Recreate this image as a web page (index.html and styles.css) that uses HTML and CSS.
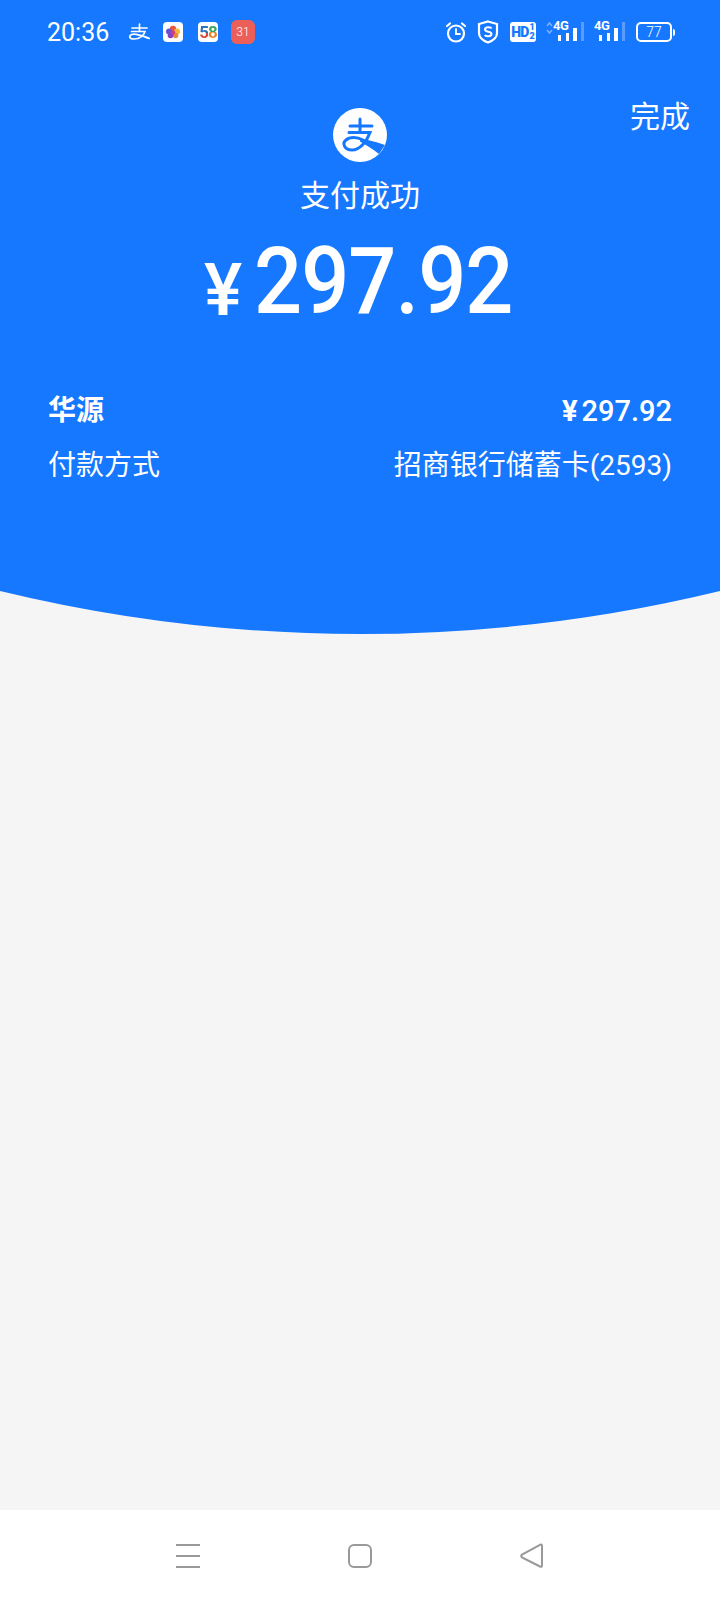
FILE: index.html
```html
<!DOCTYPE html>
<html lang="zh">
<head>
    <meta charset="UTF-8">
    <title>支付成功</title>
    <link rel="stylesheet" href="styles.css">
</head>
<body>
<div id="page">
    <div id="top">
        <div id="status">
            <span class="time">20:36</span>
            <svg class="ic-zhi" viewBox="0 0 22 18"><g fill="none" stroke="#fff" stroke-width="1.7" stroke-linecap="round"><path d="M4 5H19M11.500 1V8M3.500 8.500H17C16 12 12 16 6 16C1.500 16 0.500 13 3.500 11.500C8 9.500 14 13 21.500 15.500"/></g></svg>
            <div class="tile">
                <svg viewBox="0 0 20 20">
                    <circle cx="10" cy="7" r="3.200" fill="#e8583f"/>
                    <circle cx="14" cy="9.500" r="3" fill="#f5b83d"/>
                    <circle cx="12.500" cy="13.500" r="2.800" fill="#e98a3a"/>
                    <circle cx="7.500" cy="13.500" r="2.800" fill="#8a3fc0"/>
                    <circle cx="6" cy="9.500" r="3" fill="#6a4fd0"/>
                    <circle cx="10" cy="10.500" r="2.200" fill="#d23f7a"/>
                </svg>
            </div>
            <div class="tile tile58"><span class="five">5</span><span class="eight">8</span></div>
            <div class="badge31">31</div>
            <div class="spacer"></div>
            <svg class="ic-alarm" viewBox="0 0 22 22"><g fill="none" stroke="#fff" stroke-linecap="round"><circle cx="11" cy="12.500" r="8" stroke-width="2.200"/><path d="M11 8V13H15" stroke-width="1.800"/><path d="M2 5L5 2.500M20 5L17 2.500" stroke-width="2.200"/></g></svg>
            <svg class="ic-shield" viewBox="0 0 22 24"><path d="M11 1.500L20 4V13C20 18 15 21 11 22.500C7 21 2 18 2 13V4Z" fill="none" stroke="#fff" stroke-width="2.200"/><path d="M14.500 8.500C14 7 8 6.500 8 9.500C8 12.500 14.500 11 14.500 14C14.500 17 8.500 16.500 7.800 15" fill="none" stroke="#fff" stroke-width="2"/></svg>
            <div class="hd"><span>HD</span><span class="frac"><em>1</em><em>2</em></span></div>
            <div class="net first">
                <svg class="updown" viewBox="0 0 7 14"><path d="M1 5L3.500 2L6 5M1 9L3.500 12L6 9" fill="none" stroke="#7db0ff" stroke-width="1.500"/></svg>
                <div class="sig"><span class="g">4G</span><i class="b1"></i><i class="b2"></i><i class="b3"></i><i class="b4"></i></div>
            </div>
            <div class="net">
                <div class="sig"><span class="g">4G</span><i class="b1"></i><i class="b2"></i><i class="b3"></i><i class="b4"></i></div>
            </div>
            <div class="batt"><div class="batt-box">77</div><div class="batt-tip"></div></div>
        </div>

        <div id="done">完成</div>
        <div class="logo">
            <svg viewBox="0 0 54 54">
                <circle cx="27" cy="27" r="27" fill="#fff"/>
                <g fill="none" stroke="#1677ff" stroke-width="3" stroke-linecap="round">
                    <path d="M17 18H39M27 11V24M16 24.500H37C34 33 27 42 19 42C11 42 9 35 13 32C17 28.500 24 29 30 32"/>
                </g>
                <path d="M27 30.500C34 31.500 43 34 52 37L46 46C40 41 33 37 27 33.500Z" fill="#1677ff"/>
            </svg>
        </div>
        <div class="title">支付成功</div>
        <div class="amount"><span class="yen">¥</span><span class="num">297.92</span></div>

        <div class="row name"><span>华源</span><span class="price"><b>¥</b>297.92</span></div>
        <div class="row second"><span>付款方式</span><span>招商银行储蓄卡(2593)</span></div>
    </div>
    <svg class="curve" viewBox="0 0 720 44" preserveAspectRatio="none"><path d="M0 0H720A1528 1528 0 0 1 0 0Z" fill="#1677ff"/></svg>
    <div id="blank"></div>
    <div id="nav">
        <svg class="nav-menu" viewBox="0 0 26 26"><path d="M1 2H25M1 13H25M1 24H25" stroke="#999" stroke-width="2" fill="none"/></svg>
        <svg class="nav-home" viewBox="0 0 26 26"><rect x="2" y="2" width="22" height="22" rx="5" fill="none" stroke="#999" stroke-width="2"/></svg>
        <svg class="nav-back" viewBox="0 0 26 26"><path d="M23 3V22.500Q23 24.500 21 23.500L3 14.500Q1.500 13 3 11.500L21 1.800Q23 1 23 3Z" fill="none" stroke="#999" stroke-width="2"/></svg>
    </div>
</div>
</body>
</html>
```

FILE: styles.css
```css
*{
    margin: 0;
    padding: 0;
    box-sizing: border-box;
}
html,body{
    width: 720px;
    height: 1600px;
    overflow: hidden;
}
body{
    font-family: Roboto, "Noto Sans CJK SC", sans-serif;
    color: white;
}
svg{
    display: block;
    flex: none;
}
#page{
    width: 720px;
    height: 1600px;
    display: flex;
    flex-direction: column;
    background: #f5f5f5;
}
#top{
    height: 591px;
    background: #1677ff;
    position: relative;
    flex: none;
}
#status{
    height: 64px;
    padding: 0 45px 0 47px;
    display: flex;
    align-items: center;
}
.time{
    font-size: 25px;
    font-weight: 400;
    width: 81px;
}
.ic-zhi{
    width: 22px;
    height: 18px;
    margin-right: 13px;
}
.tile{
    width: 20px;
    height: 20px;
    border-radius: 4px;
    background: white;
    margin-right: 15px;
}
.tile58{
    display: flex;
    justify-content: center;
    align-items: center;
    font-size: 17px;
    font-weight: 700;
    line-height: 20px;
    letter-spacing: -1px;
}
.five{
    background: linear-gradient(#2f6fb5 55%, #d9483b 55%);
    -webkit-background-clip: text;
    background-clip: text;
    color: transparent;
}
.eight{
    background: linear-gradient(#3aa35c 50%, #e8862a 50%);
    -webkit-background-clip: text;
    background-clip: text;
    color: transparent;
}
.badge31{
    width: 24px;
    height: 24px;
    margin-left: -2px;
    border-radius: 6px;
    background: #ec5f59;
    font-size: 12px;
    font-weight: 300;
    line-height: 24px;
    text-align: center;
}
.spacer{
    flex: 1;
}
.ic-alarm{
    width: 22px;
    height: 22px;
    margin-right: 10px;
}
.ic-shield{
    width: 22px;
    height: 24px;
    margin-right: 11px;
}
.hd{
    width: 26px;
    height: 20px;
    background: white;
    border-radius: 3px;
    color: #1677ff;
    display: flex;
    align-items: center;
    justify-content: center;
    font-size: 14px;
    font-weight: 900;
    letter-spacing: -.8px;
    margin-right: 10px;
}
.frac{
    font-size: 9px;
    line-height: 9px;
    margin-left: 1px;
    letter-spacing: 0;
    display: flex;
    flex-direction: column;
}
.frac em{
    font-style: normal;
}
.net{
    display: flex;
    align-items: flex-end;
    margin: 0 10px 2px 0;
}
.net.first{
    margin-right: 11px;
}
.updown{
    width: 7px;
    height: 14px;
    margin-bottom: 6px;
}
.sig{
    width: 30px;
    height: 20px;
    position: relative;
}
.g{
    position: absolute;
    left: 0;
    top: -2px;
    font-size: 13px;
    font-weight: 700;
    line-height: 13px;
    letter-spacing: -.5px;
}
.sig i{
    position: absolute;
    bottom: 0;
    width: 3px;
    background: white;
}
.sig .b1{
    left: 5px;
    height: 6px;
}
.sig .b2{
    left: 13px;
    height: 8px;
}
.sig .b3{
    left: 20px;
    width: 4px;
    height: 13px;
}
.sig .b4{
    left: 28px;
    height: 19px;
    background: #5d9cff;
}
.batt{
    display: flex;
    align-items: center;
    margin-left: 2px;
}
.batt-box{
    width: 36px;
    height: 20px;
    border: 2px solid white;
    border-radius: 5px;
    font-size: 14px;
    font-weight: 300;
    line-height: 16px;
    text-align: center;
}
.batt-tip{
    width: 2px;
    height: 7px;
    background: white;
    border-radius: 0 2px 2px 0;
    margin-left: 1px;
}
#done{
    position: absolute;
    right: 30px;
    top: 97px;
    font-size: 30px;
    line-height: 40px;
}
.logo{
    width: 54px;
    height: 54px;
    margin: 44px auto 0;
}
.logo svg{
    width: 54px;
    height: 54px;
}
.title{
    margin-top: 14px;
    text-align: center;
    font-size: 30px;
    line-height: 40px;
}
.amount{
    height: 100px;
    margin-top: 16px;
    padding-left: 204px;
    display: flex;
    align-items: baseline;
    line-height: 100px;
}
.yen{
    font-size: 72px;
    font-weight: 500;
    width: 50px;
    transform: translateY(2px);
}
.num{
    font-size: 92px;
    font-weight: 500;
    letter-spacing: -1px;
    transform: scaleX(.92);
    transform-origin: left center;
}
.row{
    padding: 0 48px;
    display: flex;
    justify-content: space-between;
    font-size: 28px;
    line-height: 54px;
}
.row.name{
    margin-top: 52px;
    font-weight: 700;
}
.row.second{
    margin-top: 1px;
}
.price{
    font-weight: 500;
    font-size: 29px;
}
.price b{
    font-weight: 700;
    margin-right: 4px;
}
.curve{
    width: 720px;
    height: 44px;
    margin-bottom: -44px;
}
#blank{
    flex: 1;
}
#nav{
    height: 90px;
    background: white;
    flex: none;
    padding-top: 33px;
    display: flex;
    justify-content: center;
    gap: 146px;
}
#nav svg{
    width: 26px;
    height: 26px;
}
```
